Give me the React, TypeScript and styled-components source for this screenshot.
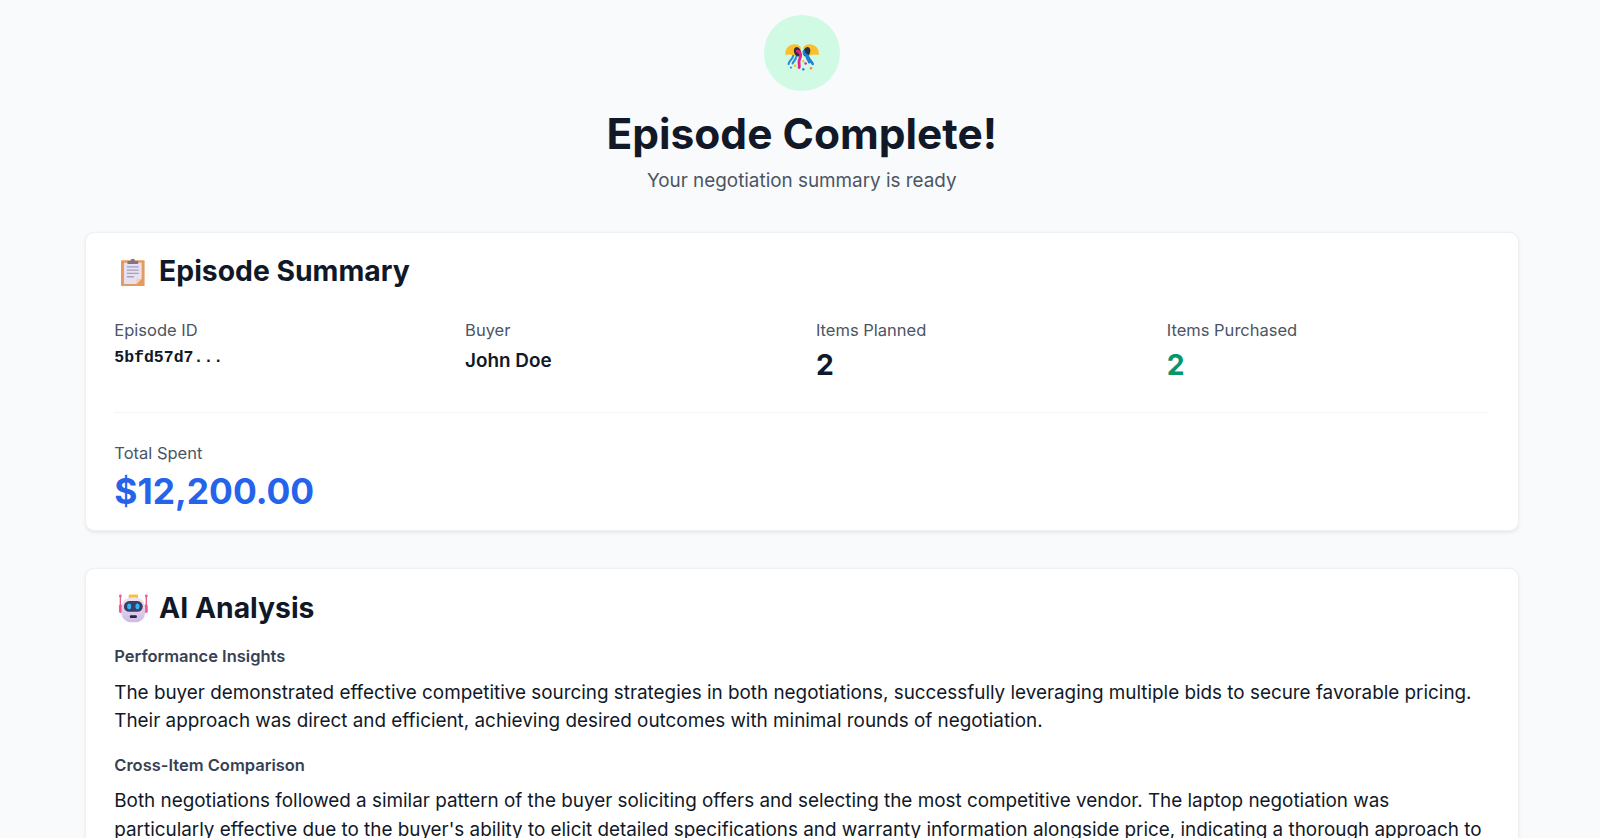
import React from "react";
import styled, { createGlobalStyle } from "styled-components";

const GlobalStyle = createGlobalStyle`
  html, body {
    margin: 0;
    padding: 0;
    background: #f9fafb;
    font-family: Inter, "Liberation Sans", sans-serif;
    color: #111827;
  }
`;

const PartyIcon = () => (
  <svg width="29" height="24" viewBox="0 0 29 24">
    <path d="M0.5 9.5 C-0.5 4 3.5 0.3 8 0.3 C10.5 0.3 13 1.5 13.6 3.5 L10 11 C7 9 3 8.5 0.5 9.5Z" fill="#fbbf2d" />
    <path d="M28.5 9.5 C29.5 4 25.5 0.3 21 0.3 C18.5 0.3 16 1.5 15.4 3.5 L19 11 C22 9 26 8.5 28.5 9.5Z" fill="#fbbf2d" />
    <ellipse cx="10.6" cy="6.6" rx="2.9" ry="4.2" transform="rotate(-20 10.6 6.6)" fill="#3a2a3e" />
    <ellipse cx="18.4" cy="6.6" rx="2.9" ry="4.2" transform="rotate(20 18.4 6.6)" fill="#24324f" />
    <path d="M7 10 C6.5 13 3.5 14 3 17 M9.5 11 C9 13.5 7.5 14 6.5 16.5" stroke="#2a8fd8" strokeWidth="1.8" fill="none" strokeLinecap="round" />
    <path d="M10.5 6 C15 8 13 11 12 14 C11.5 16 12.5 17.5 12 20" stroke="#e6208d" strokeWidth="2.4" fill="none" strokeLinecap="round" />
    <path d="M16 6 C15 10 19 8 20 11.5 C20.5 13.5 22.5 14.5 23.5 17 M18.5 10 C18 12.5 20 13 20.5 15.5" stroke="#1f7fd0" strokeWidth="2.1" fill="none" strokeLinecap="round" />
    <circle cx="8.5" cy="18.5" r="1.1" fill="#fbbf2d" />
    <circle cx="15.5" cy="14.5" r="1" fill="#fbbf2d" />
    <circle cx="17.5" cy="16.5" r="1.1" fill="#e6208d" />
    <circle cx="15.5" cy="21.5" r="1.1" fill="#2a8fd8" />
    <circle cx="22" cy="20.5" r="1.1" fill="#f28c28" />
    <circle cx="5" cy="20" r="0.9" fill="#2a8fd8" />
  </svg>
);

const ClipboardIcon = () => (
  <svg width="20" height="24" viewBox="0 0 20 24">
    <rect x="0" y="2" width="20" height="22" rx="0.8" fill="#e59a62" />
    <path d="M2.5 4 H17.5 V17.5 L13 22 H2.5Z" fill="#e6e0f0" />
    <path d="M13 22 L17.5 17.5 H13Z" fill="#f6cfb0" />
    <path d="M5 7.5 H15 M5 10.3 H15 M5 13.1 H15 M5 15.9 H11" stroke="#a9a0bd" strokeWidth="1.1" />
    <path d="M5.5 5 V2.5 H8 C8.4 0 11.6 0 12 2.5 H14.5 V5Z" fill="#7f7588" />
  </svg>
);

const RobotIcon = () => (
  <svg width="26" height="24" viewBox="0 0 26 24">
    <defs>
      <linearGradient id="robotFace" x1="0" y1="0" x2="0" y2="1">
        <stop offset="0" stopColor="#f1e4f1" />
        <stop offset="1" stopColor="#cdbbe4" />
      </linearGradient>
    </defs>
    <path d="M2 2 V13 M24 2 V13" stroke="#ee5c8f" strokeWidth="1.2" />
    <circle cx="2" cy="1.6" r="1.2" fill="#ee5c8f" />
    <circle cx="24" cy="1.6" r="1.2" fill="#ee5c8f" />
    <rect x="9" y="0.5" width="8" height="3.5" rx="1" fill="#f5c144" />
    <rect x="0.8" y="9" width="3" height="7" rx="1.3" fill="#ee5c8f" />
    <rect x="22.2" y="9" width="3" height="7" rx="1.3" fill="#ee5c8f" />
    <rect x="3" y="3" width="20" height="21" rx="8" fill="url(#robotFace)" />
    <rect x="5" y="6" width="16" height="9" rx="4.5" fill="#3a3d66" />
    <ellipse cx="9.5" cy="10.5" rx="1.7" ry="2.4" fill="#37b3f5" />
    <ellipse cx="16.5" cy="10.5" rx="1.7" ry="2.4" fill="#37b3f5" />
    <rect x="10" y="18" width="6" height="2.4" rx="0.8" fill="#2b2740" />
  </svg>
);

const Page = styled.div`
  zoom: 1.18;
  box-sizing: border-box;
  height: 710px;
  overflow: hidden;
  padding: 13px 69px 0 72px;
`;

const Hero = styled.header`
  display: flex;
  flex-direction: column;
  align-items: center;
  margin-bottom: 31px;
`;

const Badge = styled.div`
  width: 64px;
  height: 64px;
  border-radius: 50%;
  background: #d1fae5;
  display: flex;
  align-items: center;
  justify-content: center;
  padding-top: 9px;
  box-sizing: border-box;
  margin-bottom: 16px;
`;

const Title = styled.h1`
  margin: 0 0 8.9px;
  font-size: 36px;
  line-height: 40px;
  font-weight: 700;
  color: #111827;
`;

const Subtitle = styled.p`
  margin: 0;
  font-size: 16px;
  line-height: 24px;
  color: #4b5563;
`;

const Card = styled.section`
  background: #fff;
  border: 1px solid #eef0f3;
  border-radius: 8px;
  box-shadow: 0 1px 3px rgba(0, 0, 0, 0.07);
  padding: 16.5px 24px 14px;
  margin-bottom: 31.9px;
`;

const CardTitle = styled.h2<{ $tight?: boolean }>`
  margin: ${(p) => (p.$tight ? "0.8px 0 15.2px" : "0 0 24px")};
  display: flex;
  align-items: center;
  gap: 6px;
  font-size: 24px;
  line-height: 32px;
  font-weight: 700;
  color: #111827;
`;

const IconSlot = styled.span`
  width: 32px;
  height: 32px;
  display: flex;
  align-items: center;
  justify-content: center;
`;

const StatGrid = styled.div`
  display: grid;
  grid-template-columns: repeat(4, 1fr);
  column-gap: 24px;
  padding-bottom: 23px;
  border-bottom: 1px solid #f3f4f6;
  margin-bottom: 24.8px;
`;

const StatLabel = styled.div`
  font-size: 14px;
  line-height: 20px;
  margin-bottom: 4px;
  color: #4b5563;
`;

const MonoValue = styled.div`
  font-family: "Liberation Mono", monospace;
  font-size: 14px;
  font-weight: 700;
  line-height: 20px;
  margin-top: -1px;
  color: #111827;
`;

const NameValue = styled.div`
  font-size: 16px;
  line-height: 24px;
  font-weight: 600;
  color: #111827;
`;

const CountValue = styled.div<{ $accent?: boolean }>`
  font-size: 24px;
  line-height: 32px;
  font-weight: 700;
  color: ${(p) => (p.$accent ? "#059669" : "#111827")};
`;

const TotalValue = styled.div`
  margin-top: 1.8px;
  font-size: 30px;
  line-height: 36px;
  font-weight: 700;
  color: #2563eb;
`;

const SectionLabel = styled.h3`
  margin: 0 0 8.5px;
  font-size: 14px;
  line-height: 20px;
  font-weight: 600;
  color: #374151;
`;

const Paragraph = styled.p`
  margin: 0 0 15.5px;
  font-size: 16px;
  line-height: 24px;
  color: #111827;
`;

export default function App() {
  return (
    <>
      <GlobalStyle />
      <Page>
        <Hero>
          <Badge>
            <PartyIcon />
          </Badge>
          <Title>Episode Complete!</Title>
          <Subtitle>Your negotiation summary is ready</Subtitle>
        </Hero>

        <Card>
          <CardTitle>
            <IconSlot>
              <ClipboardIcon />
            </IconSlot>
            Episode Summary
          </CardTitle>
          <StatGrid>
            <div>
              <StatLabel>Episode ID</StatLabel>
              <MonoValue>5bfd57d7...</MonoValue>
            </div>
            <div>
              <StatLabel>Buyer</StatLabel>
              <NameValue>John Doe</NameValue>
            </div>
            <div>
              <StatLabel>Items Planned</StatLabel>
              <CountValue>2</CountValue>
            </div>
            <div>
              <StatLabel>Items Purchased</StatLabel>
              <CountValue $accent>2</CountValue>
            </div>
          </StatGrid>
          <StatLabel>Total Spent</StatLabel>
          <TotalValue>$12,200.00</TotalValue>
        </Card>

        <Card>
          <CardTitle $tight>
            <IconSlot>
              <RobotIcon />
            </IconSlot>
            AI Analysis
          </CardTitle>
          <SectionLabel>Performance Insights</SectionLabel>
          <Paragraph>
            The buyer demonstrated effective competitive sourcing strategies in both negotiations, successfully
            leveraging multiple bids to secure favorable pricing. Their approach was direct and efficient, achieving
            desired outcomes with minimal rounds of negotiation.
          </Paragraph>
          <SectionLabel>Cross-Item Comparison</SectionLabel>
          <Paragraph>
            Both negotiations followed a similar pattern of the buyer soliciting offers and selecting the most
            competitive vendor. The laptop negotiation was particularly effective due to the buyer's ability to elicit
            detailed specifications and warranty information alongside price, indicating a thorough approach to
          </Paragraph>
        </Card>
      </Page>
    </>
  );
}
